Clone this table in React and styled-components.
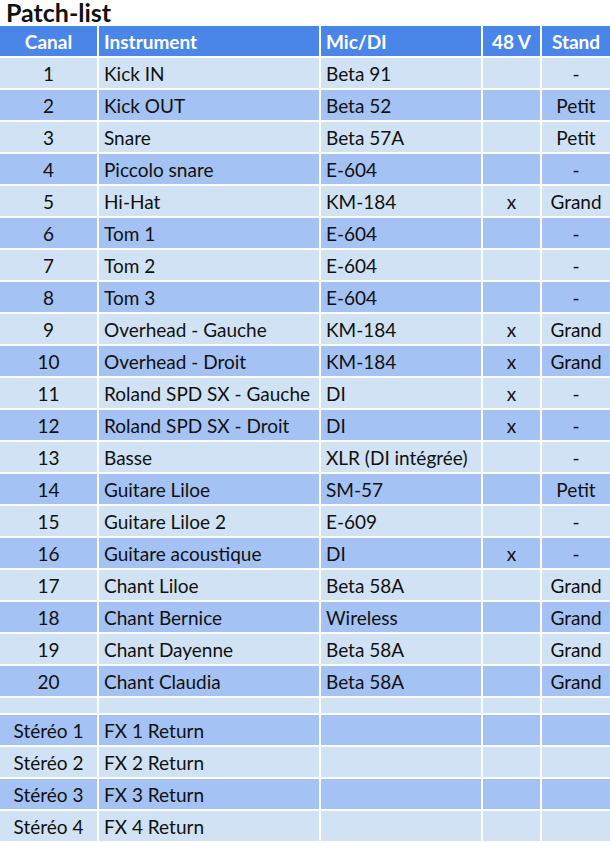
import styled, { createGlobalStyle } from "styled-components";

const GlobalStyle = createGlobalStyle`
  body {
    margin: 0;
    background: #ffffff;
    font-family: Lato, "Liberation Sans", sans-serif;
    color: #111111;
  }
`;

const rows = [
  ["1", "Kick IN", "Beta 91", "", "-"],
  ["2", "Kick OUT", "Beta 52", "", "Petit"],
  ["3", "Snare", "Beta 57A", "", "Petit"],
  ["4", "Piccolo snare", "E-604", "", "-"],
  ["5", "Hi-Hat", "KM-184", "x", "Grand"],
  ["6", "Tom 1", "E-604", "", "-"],
  ["7", "Tom 2", "E-604", "", "-"],
  ["8", "Tom 3", "E-604", "", "-"],
  ["9", "Overhead - Gauche", "KM-184", "x", "Grand"],
  ["10", "Overhead - Droit", "KM-184", "x", "Grand"],
  ["11", "Roland SPD SX - Gauche", "DI", "x", "-"],
  ["12", "Roland SPD SX - Droit", "DI", "x", "-"],
  ["13", "Basse", "XLR (DI intégrée)", "", "-"],
  ["14", "Guitare Liloe", "SM-57", "", "Petit"],
  ["15", "Guitare Liloe 2", "E-609", "", "-"],
  ["16", "Guitare acoustique", "DI", "x", "-"],
  ["17", "Chant Liloe", "Beta 58A", "", "Grand"],
  ["18", "Chant Bernice", "Wireless", "", "Grand"],
  ["19", "Chant Dayenne", "Beta 58A", "", "Grand"],
  ["20", "Chant Claudia", "Beta 58A", "", "Grand"],
  null,
  ["Stéréo 1", "FX 1 Return", "", "", ""],
  ["Stéréo 2", "FX 2 Return", "", "", ""],
  ["Stéréo 3", "FX 3 Return", "", "", ""],
  ["Stéréo 4", "FX 4 Return", "", "", ""],
];

const Page = styled.div`
  width: 610px;
`;

const Title = styled.h1`
  margin: 0;
  height: 26px;
  padding-left: 6px;
  font-size: 25px;
  line-height: 24px;
  font-weight: 700;
  color: #111111;
`;

const Grid = styled.div`
  display: grid;
  grid-template-columns: 97px 220px 160px 57px 1fr;
  column-gap: 2px;
  row-gap: 2px;
  background: #ffffff;
`;

const Cell = styled.div`
  height: ${(p) => (p.$short ? "15px" : "30px")};
  display: flex;
  align-items: center;
  justify-content: ${(p) => (p.$center ? "center" : "flex-start")};
  padding: 0 ${(p) => (p.$center ? "0" : "5px")};
  font-size: 19px;
  white-space: nowrap;
  overflow: hidden;
  background: ${(p) => (p.$dark ? "#a4c2f4" : "#d0e2f4")};
`;

const HeadCell = styled(Cell)`
  background: #4a86e8;
  color: #ffffff;
  font-weight: 700;
`;

const centered = [true, false, false, true, true];
const heads = ["Canal", "Instrument", "Mic/DI", "48 V", "Stand"];

export default function App() {
  return (
    <Page>
      <GlobalStyle />
      <Title>Patch-list</Title>
      <Grid>
        {heads.map((h, i) => (
          <HeadCell key={h} $center={centered[i]}>
            {h}
          </HeadCell>
        ))}
        {rows.map((row, r) =>
          (row || ["", "", "", "", ""]).map((v, c) => (
            <Cell
              key={`${r}-${c}`}
              $dark={r % 2 === 1}
              $center={centered[c]}
              $short={!row}
            >
              {v}
            </Cell>
          ))
        )}
      </Grid>
    </Page>
  );
}
